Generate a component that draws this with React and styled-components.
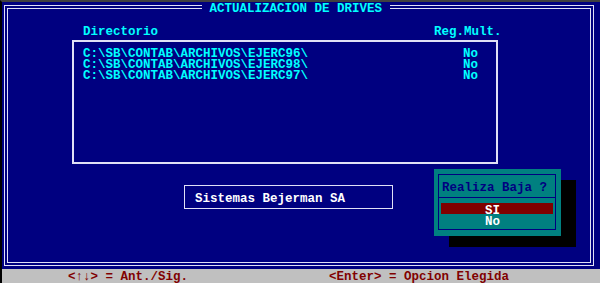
import React from "react";
import styled, { createGlobalStyle } from "styled-components";

const Global = createGlobalStyle`
  html, body { margin: 0; padding: 0; background: #000080; }
  * { box-sizing: border-box; }
`;

const NAVY = "#000080";
const CYAN = "#00ffff";
const LINE = "#e0e0f6";
const TEAL = "#008080";
const MAROON = "#800000";
const GRAY = "#c0c0c0";

const Screen = styled.div`
  width: 600px;
  height: 283px;
  display: flex;
  flex-direction: column;
  border-top: 2px solid #404040;
  border-left: 2px solid #000;
  font-family: "Liberation Mono", "DejaVu Sans Mono", monospace;
  font-size: 12.5px;
  font-weight: bold;
  line-height: 11px;
  white-space: pre;
  overflow: hidden;
`;

const Main = styled.div`
  flex: 1;
  display: flex;
  background: ${NAVY};
  padding: 3px 6px 3px 2px;
`;

const Frame = styled.div`
  position: relative;
  flex: 1;
  display: flex;
  border: 1px solid ${LINE};
  padding: 2px;
`;

const InnerFrame = styled.div`
  flex: 1;
  display: flex;
  flex-direction: column;
  border: 1px solid ${LINE};
  padding-top: 18px;
`;

const Title = styled.div`
  position: absolute;
  top: -2px;
  left: 197px;
  padding: 0 7.5px;
  background: ${NAVY};
  color: ${CYAN};
`;

const Header = styled.div`
  display: grid;
  grid-template-columns: 351px auto;
  margin-left: 75px;
  color: ${CYAN};
`;

const ListBox = styled.div`
  margin: 2px 0 0 64px;
  width: 426px;
  height: 124px;
  border: 2px solid ${LINE};
  padding: 7px 0 0 9px;
`;

const ListRow = styled.div`
  display: grid;
  grid-template-columns: 380px auto;
  color: ${CYAN};
`;

const BottomRow = styled.div`
  display: flex;
  align-items: flex-start;
  margin-top: 5px;
  padding-left: 176px;
`;

const CompanyBox = styled.div`
  margin-top: 16px;
  width: 209px;
  height: 24px;
  border: 1px solid ${LINE};
  padding: 8px 0 0 10px;
  color: #ffffff;
`;

const Dialog = styled.div`
  margin-left: 41px;
  width: 127px;
  height: 67px;
  display: flex;
  background: ${TEAL};
  box-shadow: 15px 11px 0 #000;
  padding: 5px 5px 6px 4px;
`;

const DialogInner = styled.div`
  flex: 1;
  display: flex;
  flex-direction: column;
  border: 1px solid ${NAVY};
`;

const DialogTitle = styled.div`
  padding: 8px 0 3px 3px;
  color: ${NAVY};
  border-bottom: 1px solid ${NAVY};
`;

const Options = styled.div`
  padding: 5px 2px 0;
`;

const Option = styled.div`
  height: 11px;
  padding: 3px 0 0 44px;
  color: #ffffff;
  background: ${(p) => (p.$selected ? MAROON : "transparent")};
`;

const StatusBar = styled.div`
  height: 14px;
  display: grid;
  grid-template-columns: 261px auto;
  padding: 1px 0 0 66px;
  background: ${GRAY};
  color: ${MAROON};
  line-height: 14px;
`;

const dirs = [
  "C:\\SB\\CONTAB\\ARCHIVOS\\EJERC96\\",
  "C:\\SB\\CONTAB\\ARCHIVOS\\EJERC98\\",
  "C:\\SB\\CONTAB\\ARCHIVOS\\EJERC97\\",
];

export default function App() {
  return (
    <>
      <Global />
      <Screen>
        <Main>
          <Frame>
            <Title>ACTUALIZACION DE DRIVES</Title>
            <InnerFrame>
              <Header>
                <span>Directorio</span>
                <span>Reg.Mult.</span>
              </Header>
              <ListBox>
                {dirs.map((d) => (
                  <ListRow key={d}>
                    <span>{d}</span>
                    <span>No</span>
                  </ListRow>
                ))}
              </ListBox>
              <BottomRow>
                <CompanyBox>Sistemas Bejerman SA</CompanyBox>
                <Dialog>
                  <DialogInner>
                    <DialogTitle>Realiza Baja ?</DialogTitle>
                    <Options>
                      <Option $selected>SI</Option>
                      <Option>No</Option>
                    </Options>
                  </DialogInner>
                </Dialog>
              </BottomRow>
            </InnerFrame>
          </Frame>
        </Main>
        <StatusBar>
          <span>{"<↑↓> = Ant./Sig."}</span>
          <span>{"<Enter> = Opcion Elegida"}</span>
        </StatusBar>
      </Screen>
    </>
  );
}
